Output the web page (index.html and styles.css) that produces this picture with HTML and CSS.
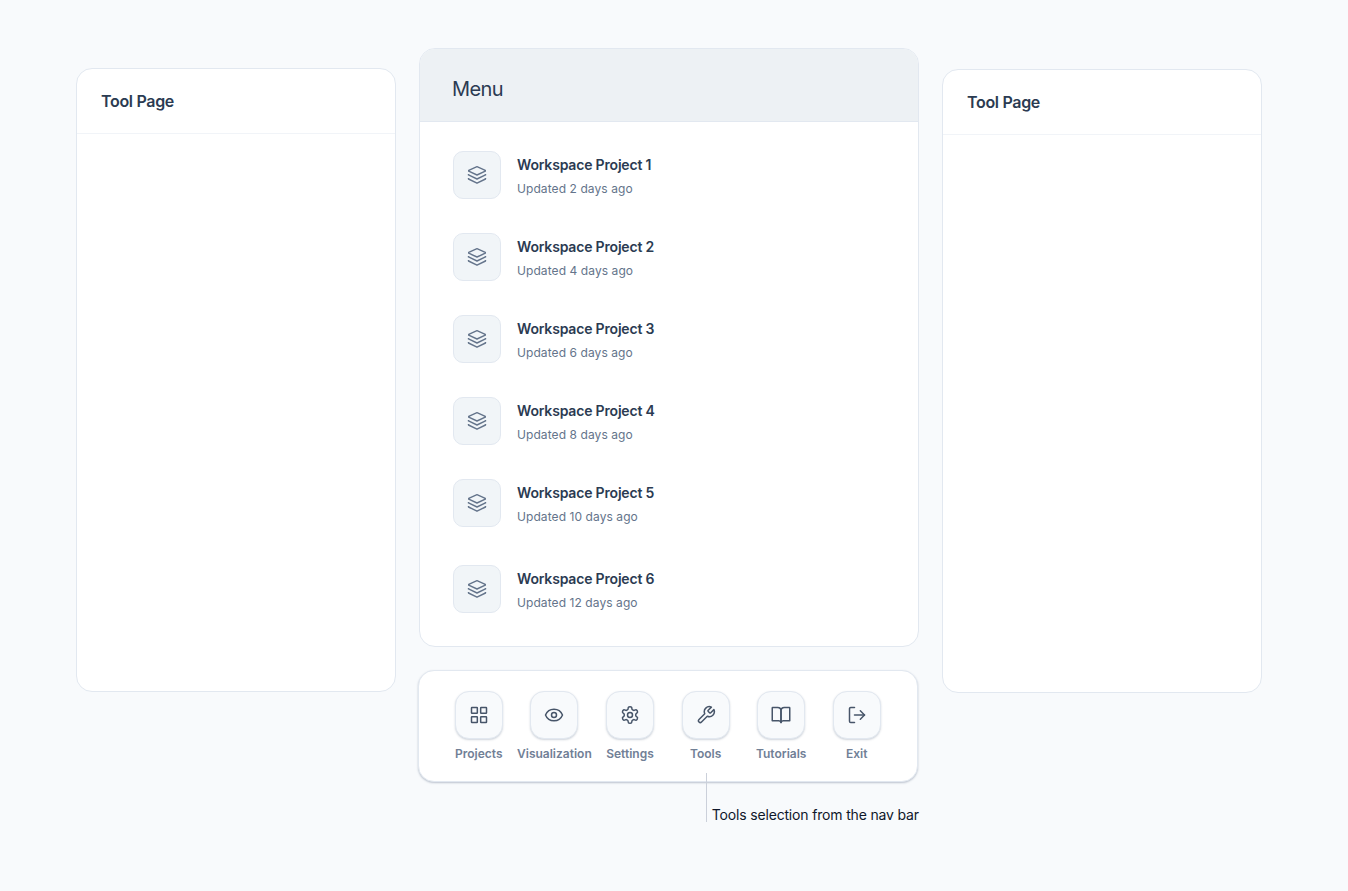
FILE: index.html
```html
<!DOCTYPE html>
<html lang="en">
<head>
    <meta charset="UTF-8">
    <meta name="viewport" content="width=device-width, initial-scale=1.0">
    <title>Workspace Menu</title>
    <link rel="stylesheet" href="styles.css">
</head>
<body>
    <!-- Shared icon shapes -->
    <svg class="icon-defs" aria-hidden="true">
        <symbol id="layers" viewBox="0 0 20 20">
            <path d="M10 1.700 L18.300 5.400 V6.200 L10 10 L1.700 6.200 V5.400 Z"/>
            <path d="M1.500 8.900 V9.900 L10 14 L18.500 9.900 V8.900"/>
            <path d="M1.500 13 V14 L10 18.200 L18.500 14 V13"/>
        </symbol>
    </svg>

    <div class="layout">
        <section class="tool-page">
            <h2>Tool Page</h2>
        </section>

        <main class="center">
            <section class="menu">
                <h1>Menu</h1>
                <ul class="project-list">
                    <li class="project">
                        <span class="project-icon"><svg><use href="#layers"/></svg></span>
                        <div>
                            <h3>Workspace Project 1</h3>
                            <p>Updated 2 days ago</p>
                        </div>
                    </li>
                    <li class="project">
                        <span class="project-icon"><svg><use href="#layers"/></svg></span>
                        <div>
                            <h3>Workspace Project 2</h3>
                            <p>Updated 4 days ago</p>
                        </div>
                    </li>
                    <li class="project">
                        <span class="project-icon"><svg><use href="#layers"/></svg></span>
                        <div>
                            <h3>Workspace Project 3</h3>
                            <p>Updated 6 days ago</p>
                        </div>
                    </li>
                    <li class="project">
                        <span class="project-icon"><svg><use href="#layers"/></svg></span>
                        <div>
                            <h3>Workspace Project 4</h3>
                            <p>Updated 8 days ago</p>
                        </div>
                    </li>
                    <li class="project">
                        <span class="project-icon"><svg><use href="#layers"/></svg></span>
                        <div>
                            <h3>Workspace Project 5</h3>
                            <p>Updated 10 days ago</p>
                        </div>
                    </li>
                    <li class="project">
                        <span class="project-icon"><svg><use href="#layers"/></svg></span>
                        <div>
                            <h3>Workspace Project 6</h3>
                            <p>Updated 12 days ago</p>
                        </div>
                    </li>
                </ul>
            </section>

            <nav class="navbar">
                <a class="nav-item">
                    <span class="nav-icon">
                        <svg viewBox="0 0 24 24"><rect x="3" y="3" width="7" height="7" rx="0.6"/><rect x="14" y="3" width="7" height="7" rx="0.6"/><rect x="14" y="14" width="7" height="7" rx="0.6"/><rect x="3" y="14" width="7" height="7" rx="0.6"/></svg>
                    </span>
                    Projects
                </a>
                <a class="nav-item">
                    <span class="nav-icon">
                        <svg viewBox="0 0 24 24"><path d="M1.8 12C3.6 7.6 7.5 5 12 5s8.400 2.600 10.200 7c-1.800 4.400-5.700 7-10.200 7S3.600 16.400 1.800 12z"/><circle cx="12" cy="12" r="3"/></svg>
                    </span>
                    Visualization
                </a>
                <a class="nav-item">
                    <span class="nav-icon">
                        <svg viewBox="0 0 24 24"><path d="M12.220 2h-.44a2 2 0 0 0-2 2v.18a2 2 0 0 1-1 1.730l-.43.25a2 2 0 0 1-2 0l-.15-.08a2 2 0 0 0-2.730.73l-.22.38a2 2 0 0 0 .73 2.730l.15.1a2 2 0 0 1 1 1.720v.51a2 2 0 0 1-1 1.740l-.15.09a2 2 0 0 0-.73 2.730l.22.38a2 2 0 0 0 2.730.73l.15-.08a2 2 0 0 1 2 0l.43.25a2 2 0 0 1 1 1.730V20a2 2 0 0 0 2 2h.44a2 2 0 0 0 2-2v-.18a2 2 0 0 1 1-1.730l.43-.25a2 2 0 0 1 2 0l.15.08a2 2 0 0 0 2.730-.73l.22-.39a2 2 0 0 0-.73-2.730l-.15-.08a2 2 0 0 1-1-1.740v-.5a2 2 0 0 1 1-1.740l.15-.09a2 2 0 0 0 .73-2.730l-.22-.38a2 2 0 0 0-2.730-.73l-.15.08a2 2 0 0 1-2 0l-.43-.25a2 2 0 0 1-1-1.730V4a2 2 0 0 0-2-2z"/><circle cx="12" cy="12" r="3"/></svg>
                    </span>
                    Settings
                </a>
                <a class="nav-item nav-tools">
                    <span class="nav-icon">
                        <svg viewBox="0 0 24 24"><path d="M14.700 6.300a1 1 0 0 0 0 1.400l1.600 1.600a1 1 0 0 0 1.400 0l3.770-3.770a6 6 0 0 1-7.940 7.940l-6.910 6.910a2.120 2.120 0 0 1-3-3l6.910-6.910a6 6 0 0 1 7.940-7.940l-3.760 3.760z"/></svg>
                    </span>
                    Tools
                    <span class="callout">Tools selection from the nav bar</span>
                </a>
                <a class="nav-item">
                    <span class="nav-icon">
                        <svg viewBox="0 0 24 24"><path d="M2 3h6a4 4 0 0 1 4 4v14a3 3 0 0 0-3-2H1.500V3.500A.5.5 0 0 1 2 3z"/><path d="M22 3h-6a4 4 0 0 0-4 4v14a3 3 0 0 1 3-2h7.500V3.500A.5.5 0 0 0 22 3z"/></svg>
                    </span>
                    Tutorials
                </a>
                <a class="nav-item">
                    <span class="nav-icon">
                        <svg viewBox="0 0 24 24"><path d="M9 3H4.500a1.500 1.500 0 0 0-1.500 1.500v15a1.500 1.500 0 0 0 1.500 1.500H9"/><path d="M16 17l5-5-5-5"/><path d="M21 12H9"/></svg>
                    </span>
                    Exit
                </a>
            </nav>
        </main>

        <section class="tool-page tool-page-right">
            <h2>Tool Page</h2>
        </section>
    </div>
</body>
</html>
```
FILE: styles.css
```css
* {
    box-sizing: border-box;
}

body {
    margin: 0;
    min-height: 100vh;
    background-color: #f8fafc;
    font-family: 'Inter', sans-serif;
    color: #2b3b52;
}

h1, h2, h3, p, ul {
    margin: 0;
    padding: 0;
}

svg {
    display: block;
    fill: none;
    stroke: currentColor;
    stroke-linecap: round;
    stroke-linejoin: round;
}

.icon-defs {
    display: none;
}

.layout {
    display: flex;
    align-items: flex-start;
    padding: 48px 0 0 76px;
}

/* Side panels */
.tool-page {
    flex: none;
    width: 320px;
    height: 624px;
    margin-top: 20px;
    background-color: #fff;
    border: 1px solid #e2e8f0;
    border-radius: 16px;
}

.tool-page-right {
    margin-top: 21px;
}

.tool-page h2 {
    height: 65px;
    padding-left: 24px;
    border-bottom: 1px solid #f1f4f8;
    font-size: 16px;
    font-weight: 600;
    line-height: 64px;
    letter-spacing: -0.32px;
}

/* Center column */
.center {
    flex: none;
    width: 500px;
    margin: 0 23px;
}

.menu {
    height: 599px;
    background-color: #fff;
    border: 1px solid #e2e8f0;
    border-radius: 16px;
    overflow: hidden;
}

.menu h1 {
    height: 73px;
    padding: 24px 32px 0;
    background-color: #edf1f4;
    border-bottom: 1px solid #e2e8f0;
    font-size: 20px;
    font-weight: 400;
    line-height: 32px;
    letter-spacing: -0.6px;
}

.project-list {
    display: flex;
    flex-direction: column;
    gap: 34px;
    padding: 29px 33px;
    list-style: none;
}

.project {
    display: flex;
    gap: 16px;
    height: 48px;
}

.project:last-child {
    margin-top: 4px;
}

.project-icon {
    display: flex;
    align-items: center;
    justify-content: center;
    width: 48px;
    height: 48px;
    background-color: #f1f5f8;
    border: 1px solid #e2e8f0;
    border-radius: 10px;
    color: #64748b;
}

.project-icon svg {
    width: 20px;
    height: 20px;
    stroke-width: 1.4;
    stroke-linecap: butt;
}

.project h3 {
    padding-top: 2px;
    font-size: 14px;
    font-weight: 600;
    line-height: 24px;
    letter-spacing: -0.18px;
}

.project p {
    font-size: 12px;
    line-height: 24px;
    letter-spacing: 0.08px;
    color: #64748b;
}

/* Bottom navigation */
.navbar {
    display: flex;
    width: 500px;
    height: 112px;
    margin: 23px 0 0 -1px;
    padding: 20px 22px 0;
    background-color: #fff;
    border: 1px solid #e2e8f0;
    border-radius: 16px;
    box-shadow: 0 1px 2px rgba(100, 116, 139, 0.4);
}

.nav-item {
    display: flex;
    flex: 0 0 75.6px;
    flex-direction: column;
    align-items: center;
    font-size: 12px;
    font-weight: 600;
    line-height: 16px;
    color: #718096;
}

.nav-icon {
    display: flex;
    align-items: center;
    justify-content: center;
    width: 48px;
    height: 48px;
    margin-bottom: 7px;
    background-color: #f8fafc;
    border: 1px solid #e2e8f0;
    border-radius: 14px;
    box-shadow: 0 1px 2px rgba(100, 116, 139, 0.3);
    color: #475569;
}

.nav-icon svg {
    width: 20px;
    height: 20px;
    stroke-width: 1.8;
}

/* Note hanging below the Tools item */
.nav-tools {
    position: relative;
}

.callout {
    position: absolute;
    top: 82px;
    left: 38px;
    height: 49px;
    padding: 32px 0 0 5px;
    border-left: 1px solid #cbd0da;
    font-size: 14px;
    font-weight: 400;
    line-height: 20px;
    letter-spacing: -0.17px;
    color: #0f172a;
    white-space: nowrap;
}
```
